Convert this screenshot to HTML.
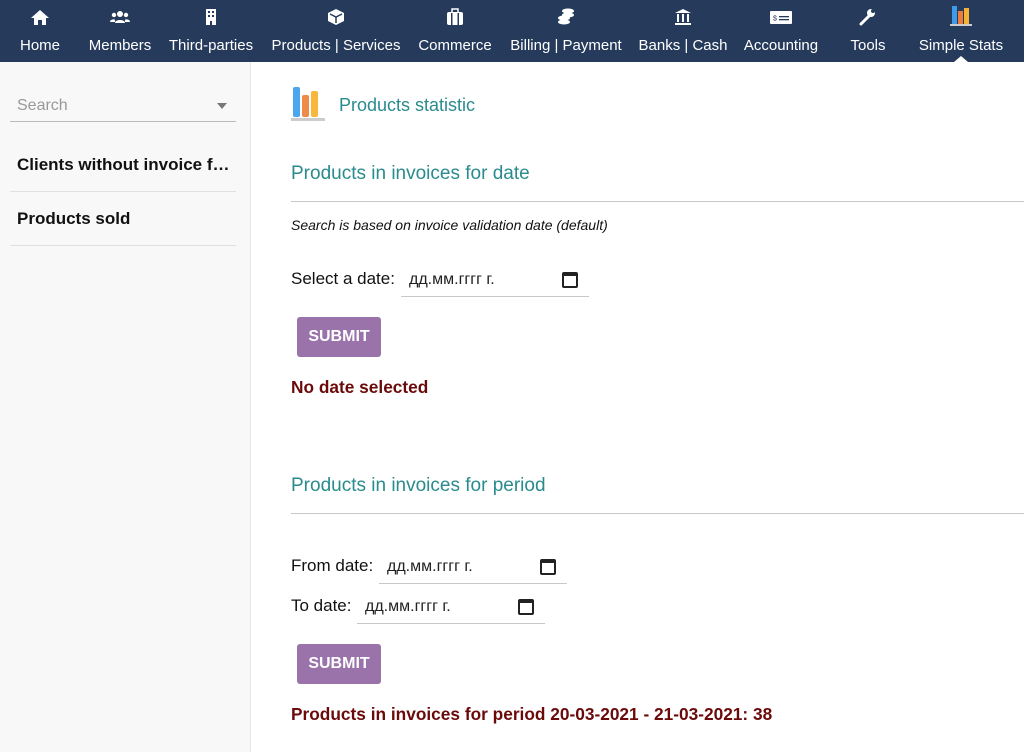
<!DOCTYPE html>
<html><head><meta charset="utf-8"><style>
*{margin:0;padding:0;box-sizing:border-box}
body{width:1024px;height:752px;overflow:hidden;background:#fff;font-family:"Liberation Sans",Arial,sans-serif;position:relative}
.nav{position:absolute;left:0;top:0;width:1024px;height:62px;background:#263b5b}
.it{position:absolute;top:0;height:62px;transform:translateX(-50%);color:#fff;text-align:center;white-space:nowrap}
.it .ic{position:absolute;left:50%;top:8px;transform:translateX(-50%);width:20px;height:18px}
.it .lb{position:absolute;top:37px;left:50%;transform:translateX(-50%);font-size:15px}
.side{position:absolute;left:0;top:62px;width:251px;height:690px;background:#f8f8f8;border-right:1px solid #e6e6e6}
.abs{position:absolute}
.teal{color:#2a8b8e}
.hr{position:absolute;left:291px;width:733px;height:1px;background:#c8c8c8}
.btn{position:absolute;width:84px;height:40px;background:#9a73ab;border-radius:3px;color:#fff;font-weight:bold;font-size:16px;text-align:center;line-height:40px}
.date{position:absolute;height:32px;border-bottom:1px solid #c8c8c8;font-size:16px;color:#222}
.cal{position:absolute;right:11px;top:7px;width:16px;height:16px;border:2px solid #222;border-top-width:4px;border-radius:2px}
.red{color:#6b0a0a;font-weight:bold;font-size:17.3px}
</style></head><body>
<div class="nav">
<div class="it" style="left:40px"><svg class="ic" viewBox="0 0 20 18"><path d="M10 2L1 10h3v7h4v-5h4v5h4v-7h3z" fill="#fff"/></svg><span class="lb">Home</span></div>
<div class="it" style="left:120px"><svg class="ic" viewBox="0 0 20 18"><circle cx="10" cy="6" r="3" fill="#fff"/><circle cx="4" cy="7" r="2.2" fill="#fff"/><circle cx="16" cy="7" r="2.2" fill="#fff"/><path d="M5 15c0-4 10-4 10 0zM0 14c0-3 5-3 5-2v2zM20 14c0-3-5-3-5-2v2z" fill="#fff"/></svg><span class="lb">Members</span></div>
<div class="it" style="left:211px"><svg class="ic" viewBox="0 0 20 18"><rect x="5" y="1" width="10" height="16" fill="#fff"/><g fill="#263b5b"><rect x="7" y="3" width="2" height="2"/><rect x="11" y="3" width="2" height="2"/><rect x="7" y="7" width="2" height="2"/><rect x="11" y="7" width="2" height="2"/><rect x="9" y="13" width="2" height="4"/></g></svg><span class="lb">Third-parties</span></div>
<div class="it" style="left:336px"><svg class="ic" viewBox="0 0 20 18"><path d="M10 1l8 4v8l-8 4-8-4V5z" fill="#fff"/><path d="M4 6l6 3 6-3M10 9v6" stroke="#263b5b" stroke-width="1.5" fill="none"/></svg><span class="lb">Products | Services</span></div>
<div class="it" style="left:455px"><svg class="ic" viewBox="0 0 20 18"><rect x="2" y="4" width="16" height="13" rx="2" fill="#fff"/><rect x="7" y="1" width="6" height="4" fill="none" stroke="#fff" stroke-width="1.5"/><rect x="6" y="5" width="1.5" height="12" fill="#263b5b"/><rect x="12.5" y="5" width="1.5" height="12" fill="#263b5b"/></svg><span class="lb">Commerce</span></div>
<div class="it" style="left:566px"><svg class="ic" viewBox="0 0 20 18"><g fill="#fff"><ellipse cx="12" cy="3" rx="6" ry="2.5"/><ellipse cx="12" cy="7" rx="6" ry="2.5"/><ellipse cx="8" cy="10" rx="6" ry="2.5"/><ellipse cx="8" cy="14" rx="6" ry="2.5"/></g></svg><span class="lb">Billing | Payment</span></div>
<div class="it" style="left:683px"><svg class="ic" viewBox="0 0 20 18"><path d="M10 1l8 4H2z" fill="#fff"/><g fill="#fff"><rect x="4" y="6" width="2" height="8"/><rect x="9" y="6" width="2" height="8"/><rect x="14" y="6" width="2" height="8"/><rect x="2" y="15" width="16" height="2"/></g></svg><span class="lb">Banks | Cash</span></div>
<div class="it" style="left:781px"><svg class="ic" viewBox="0 0 24 18" style="width:24px"><rect x="1" y="3" width="22" height="13" rx="1" fill="#fff"/><text x="4" y="12.5" font-size="7" fill="#263b5b" font-family="Liberation Sans">$</text><rect x="10" y="8" width="10" height="1.3" fill="#263b5b"/><rect x="10" y="11" width="10" height="1.3" fill="#263b5b"/></svg><span class="lb">Accounting</span></div>
<div class="it" style="left:868px"><svg class="ic" viewBox="0 0 20 18"><path d="M3 16l8-8" stroke="#fff" stroke-width="3" stroke-linecap="round"/><circle cx="13" cy="5" r="4" fill="#fff"/><circle cx="15" cy="3" r="2" fill="#263b5b"/></svg><span class="lb">Tools</span></div>
<div class="it" style="left:961px"><svg class="ic" viewBox="0 0 24 22" style="width:24px;height:22px;top:5px"><rect x="3" y="1" width="5" height="18" fill="#3d9be9"/><rect x="9" y="6" width="5" height="13" fill="#ef7b3a"/><rect x="15" y="3" width="5" height="16" fill="#f5b335"/><rect x="1" y="19" width="22" height="2" fill="#ccc"/></svg><span class="lb">Simple Stats</span></div>
<div class="abs" style="left:954px;top:56px;width:0;height:0;border-left:7px solid transparent;border-right:7px solid transparent;border-bottom:6px solid #fff"></div>
</div>
<div class="side">
<div class="abs" style="left:17px;top:35px;font-size:16px;color:#999">Search</div>
<div class="abs" style="left:217px;top:41px;width:0;height:0;border-left:5px solid transparent;border-right:5px solid transparent;border-top:6px solid #777"></div>
<div class="abs" style="left:10px;top:59px;width:226px;height:1px;background:#bbb"></div>
<div class="abs" style="left:17px;top:93px;font-size:17px;font-weight:bold;color:#111">Clients without invoice f…</div>
<div class="abs" style="left:10px;top:129px;width:226px;height:1px;background:#e0e0e0"></div>
<div class="abs" style="left:17px;top:147px;font-size:17px;font-weight:bold;color:#111">Products sold</div>
<div class="abs" style="left:10px;top:183px;width:226px;height:1px;background:#e0e0e0"></div>
</div>
<svg class="abs" style="left:290px;top:85px" width="38" height="38" viewBox="0 0 38 38"><rect x="3" y="2" width="7" height="30" rx="2" fill="#4aa6ee"/><rect x="12" y="10" width="7" height="22" rx="2" fill="#ee8a4a"/><rect x="21" y="6" width="7" height="26" rx="2" fill="#f7b73c"/><rect x="1" y="33" width="34" height="3" fill="#ccc"/></svg>
<div class="abs teal" style="left:339px;top:95px;font-size:18px">Products statistic</div>
<div class="abs teal" style="left:291px;top:163px;font-size:19px">Products in invoices for date</div>
<div class="hr" style="top:201px"></div>
<div class="abs" style="left:291px;top:217px;font-size:14px;font-style:italic;color:#111">Search is based on invoice validation date (default)</div>
<div class="abs" style="left:291px;top:269px;font-size:17px;color:#111">Select a date:</div>
<div class="date" style="left:401px;top:265px;width:188px;padding:6px 0 0 8px">дд.мм.гггг г.<div class="cal"></div></div>
<div class="btn" style="left:297px;top:317px">SUBMIT</div>
<div class="abs red" style="left:291px;top:377px">No date selected</div>
<div class="abs teal" style="left:291px;top:475px;font-size:19px">Products in invoices for period</div>
<div class="hr" style="top:513px"></div>
<div class="abs" style="left:291px;top:556px;font-size:17px;color:#111">From date:</div>
<div class="date" style="left:379px;top:552px;width:188px;padding:6px 0 0 8px">дд.мм.гггг г.<div class="cal"></div></div>
<div class="abs" style="left:291px;top:596px;font-size:17px;color:#111">To date:</div>
<div class="date" style="left:357px;top:592px;width:188px;padding:6px 0 0 8px">дд.мм.гггг г.<div class="cal"></div></div>
<div class="btn" style="left:297px;top:644px">SUBMIT</div>
<div class="abs red" style="left:291px;top:704px">Products in invoices for period 20-03-2021 - 21-03-2021: 38</div>
</body></html>
